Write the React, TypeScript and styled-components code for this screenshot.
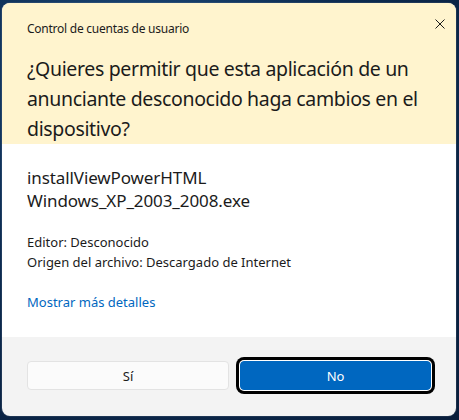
import React from "react";
import styled, { createGlobalStyle } from "styled-components";

const GlobalStyle = createGlobalStyle`
  html, body {
    margin: 0;
    padding: 0;
    height: 100%;
  }
  body {
    background: radial-gradient(ellipse at 30% 20%, #1d4a7a 0%, #0d2c52 45%, #081d3a 100%);
    font-family: "Segoe UI", "Noto Sans", "Open Sans", sans-serif;
    color: #1b1b1b;
  }
`;

const Page = styled.div`
  width: 459px;
  height: 420px;
  box-sizing: border-box;
  padding: 3px 3px 4px 2px;
`;

const Dialog = styled.div`
  display: flex;
  flex-direction: column;
  height: 413px;
  border-radius: 8px;
  overflow: hidden;
  background: #f3f3f3;
  box-shadow: 0 0 0 1px rgba(255, 255, 255, 0.08);
`;

const Header = styled.div`
  position: relative;
  background: #fff4ce;
  padding: 18px 20px 0 25px;
`;

const AppTitle = styled.div`
  font-size: 12px;
  line-height: 16px;
  letter-spacing: -0.25px;
`;

const CloseButton = styled.button`
  position: absolute;
  top: 13px;
  right: 8px;
  width: 16px;
  height: 16px;
  padding: 0;
  border: 0;
  background: transparent;
  display: flex;
  align-items: center;
  justify-content: center;
`;

const Question = styled.div`
  margin-top: 17px;
  font-size: 19.5px;
  line-height: 30px;
  letter-spacing: -0.35px;
`;

const Body = styled.div`
  background: #ffffff;
  padding: 22px 26px 25px 25px;
`;

const FileName = styled.div`
  font-size: 17px;
  line-height: 23px;
  letter-spacing: -0.1px;
`;

const Details = styled.div`
  margin-top: 20px;
  font-size: 13px;
  line-height: 20px;
`;

const MoreLink = styled.a`
  display: block;
  margin-top: 21px;
  font-size: 13px;
  line-height: 19px;
  color: #0067c0;
  text-decoration: none;
`;

const Footer = styled.div`
  flex: 1;
  display: flex;
  align-items: flex-start;
  gap: 11px;
  padding: 24px 0 0 25px;
`;

const Button = styled.button<{ $primary?: boolean; $w: number }>`
  width: ${p => p.$w}px;
  height: 29px;
  border-radius: 4px;
  font-family: inherit;
  font-size: 13px;
  box-sizing: border-box;
  border: 1px solid ${p => (p.$primary ? "#0067c0" : "#e3e3e3")};
  background: ${p => (p.$primary ? "#0067c0" : "#fbfbfb")};
  color: ${p => (p.$primary ? "#ffffff" : "#1b1b1b")};
  ${p => p.$primary && `
    box-shadow: 0 0 0 1px #ffffff, 0 0 0 4px #000000;
  `}
`;

export default function App() {
  return (
    <Page>
      <GlobalStyle />
      <Dialog>
        <Header>
          <AppTitle>Control de cuentas de usuario</AppTitle>
          <CloseButton aria-label="Cerrar">
            <svg width="10" height="10" viewBox="0 0 10 10">
              <path d="M0.5 0.5 L9.5 9.5 M9.5 0.5 L0.5 9.5" stroke="#1b1b1b" strokeWidth="1" fill="none" />
            </svg>
          </CloseButton>
          <Question>
            ¿Quieres permitir que esta aplicación de un anunciante desconocido haga cambios en el dispositivo?
          </Question>
        </Header>
        <Body>
          <FileName>
            installViewPowerHTML
            <br />
            Windows_XP_2003_2008.exe
          </FileName>
          <Details>
            Editor: Desconocido
            <br />
            Origen del archivo: Descargado de Internet
          </Details>
          <MoreLink href="#">Mostrar más detalles</MoreLink>
        </Body>
        <Footer>
          <Button $w={202}>Sí</Button>
          <Button $primary $w={191}>No</Button>
        </Footer>
      </Dialog>
    </Page>
  );
}
